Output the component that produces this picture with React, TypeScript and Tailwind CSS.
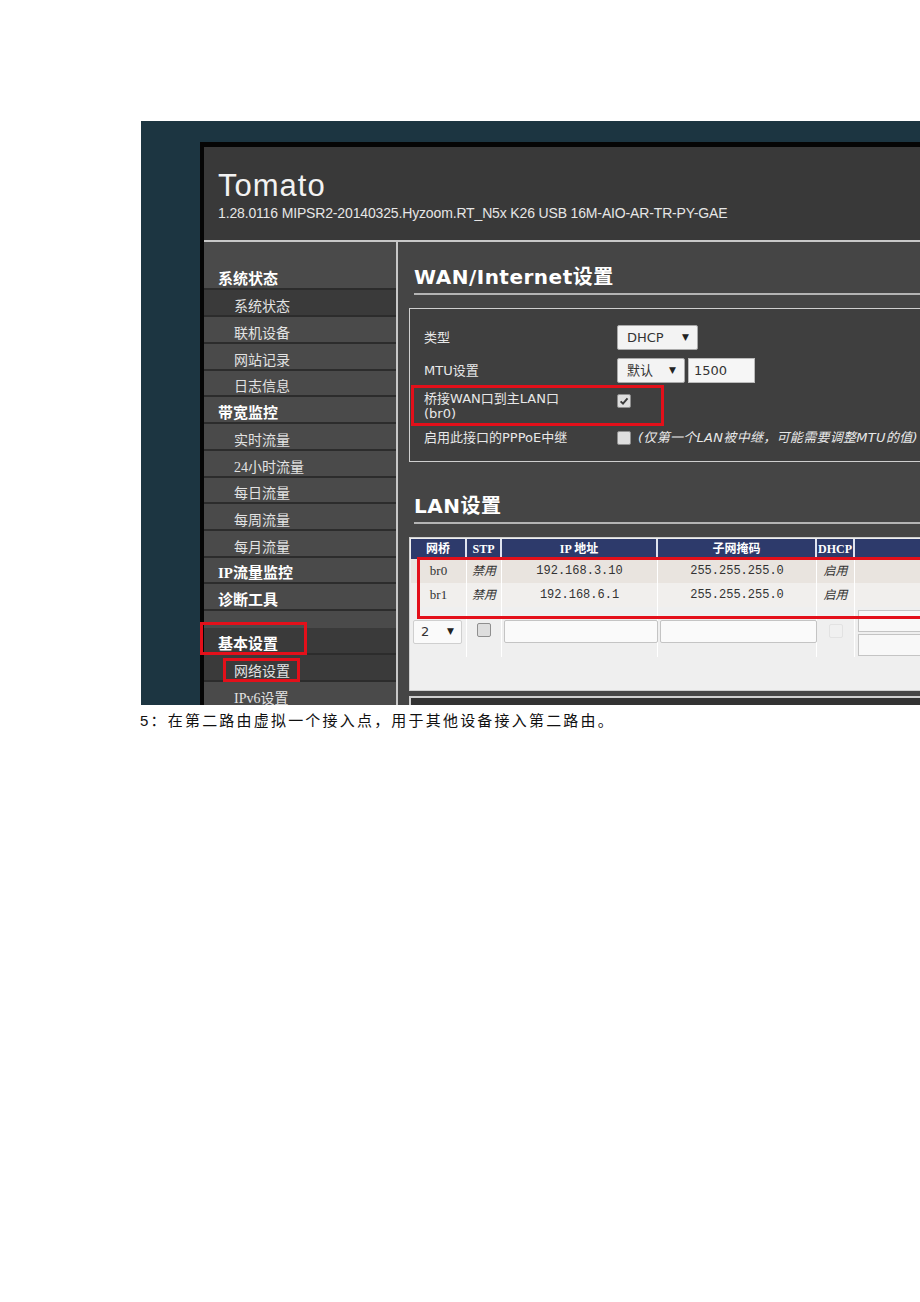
import React from "react"

const ui = "font-['DejaVu_Sans','Noto_Sans_CJK_SC',sans-serif]"
const side = "font-['Liberation_Serif','Noto_Sans_CJK_SC',serif]"
const serif = "font-['Liberation_Serif','Noto_Sans_CJK_SC',serif]"
const mono = "font-['Liberation_Mono','Noto_Sans_CJK_SC',monospace]"

type Item = { label: string; head?: boolean; active?: boolean; h: string }

const menu: Item[] = [
  { label: "系统状态", head: true, h: "h-[27px]" },
  { label: "系统状态", active: true, h: "h-[27px]" },
  { label: "联机设备", h: "h-[27px]" },
  { label: "网站记录", h: "h-[27px]" },
  { label: "日志信息", h: "h-[26px]" },
  { label: "带宽监控", head: true, h: "h-[27px]" },
  { label: "实时流量", h: "h-[27px]" },
  { label: "24小时流量", h: "h-[27px]" },
  { label: "每日流量", h: "h-[26px]" },
  { label: "每周流量", h: "h-[27px]" },
  { label: "每月流量", h: "h-[27px]" },
  { label: "IP流量监控", head: true, h: "h-[26px]" },
  { label: "诊断工具", head: true, h: "h-[27px]" },
]

function MenuRow({ item, children }: { item: Item; children?: React.ReactNode }) {
  return (
    <div
      className={`relative flex items-center border-b-2 border-[#2c2c2c] pt-[7px] ${item.h} ${
        item.active ? "bg-[#3a3a3a]" : ""
      } ${item.head ? "pl-[14px] text-[15px] font-bold text-white" : "pl-[30px] text-[14px] text-[#e2e2e2]"}`}
    >
      {item.label}
      {children}
    </div>
  )
}

function Select({ value, w }: { value: string; w: string }) {
  return (
    <div
      className={`flex h-[25px] ${w} items-center justify-between rounded-[2px] border border-[#a9a9a9] bg-[#f3f3f3] pl-[9px] pr-[8px] text-[13px] text-[#333]`}
    >
      <span>{value}</span>
      <span className="text-[9px] text-[#222]">▼</span>
    </div>
  )
}

function Check({ checked, faded }: { checked?: boolean; faded?: boolean }) {
  return (
    <span
      className={`inline-flex h-[14px] w-[14px] items-center justify-center rounded-[2px] border ${
        faded ? "border-[#e2e2e2] bg-[#f0f0f0]" : "border-[#8f8f8f] bg-[#dedede]"
      }`}
    >
      {checked && (
        <svg viewBox="0 0 10 10" className="h-[10px] w-[10px]">
          <path d="M1.6 5.3 L4 7.7 L8.5 2.3" fill="none" stroke="#3a3a3a" strokeWidth="1.9" />
        </svg>
      )}
    </span>
  )
}

const cols = "grid grid-cols-[56px_35px_156px_159px_38px_1fr]"

const lanRows = [
  { name: "br0", ip: "192.168.3.10", bg: "bg-[#e9e4df]" },
  { name: "br1", ip: "192.168.6.1", bg: "bg-[#f1efed]" },
]

export default function App() {
  return (
    <div className="min-h-[1302px] w-[920px] bg-white">
      <div className="pl-[141px] pt-[121px]">
        <div className="h-[584px] w-[779px] overflow-hidden bg-[#1c3541] pl-[59px] pt-[21px]">
          <div className={`w-[830px] border-l-4 border-t-[5px] border-[#050505] ${ui}`}>
            {/* header */}
            <div className="h-[95px] border-b-2 border-[#c8c8c8] bg-[#393939] pl-[14px] pt-[23px]">
              <div className="font-['Liberation_Sans',sans-serif] text-[31px] leading-[31px] tracking-[1px] text-[#f2f2f2]">
                Tomato
              </div>
              <div className="mt-[5px] font-['Liberation_Sans',sans-serif] text-[14px] leading-[14px] tracking-[-0.15px] text-[#e6e6e6]">
                1.28.0116 MIPSR2-20140325.Hyzoom.RT_N5x K26 USB 16M-AIO-AR-TR-PY-GAE
              </div>
            </div>

            <div className="flex h-[480px]">
              {/* sidebar */}
              <div className={`w-[194px] shrink-0 border-r-2 border-[#c8c8c8] bg-[#4a4a4a] pt-[21px] ${side}`}>
                {menu.map((m, i) => (
                  <MenuRow key={i} item={m} />
                ))}
                <div className="h-[17px]" />
                <MenuRow item={{ label: "基本设置", head: true, active: true, h: "h-[27px]" }}>
                  <div className="absolute left-[-4px] top-[-6px] h-[33px] w-[107px] border-[3px] border-[#e3101a]" />
                </MenuRow>
                <MenuRow item={{ label: "网络设置", active: true, h: "h-[27px]" }}>
                  <div className="absolute left-[19px] top-[3px] h-[24px] w-[77px] border-[3px] border-[#e3101a]" />
                </MenuRow>
                <MenuRow item={{ label: "IPv6设置", h: "h-[27px]" }} />
              </div>

              {/* main */}
              <div className="flex-1 bg-[#454545] pt-[23px]">
                <div className="ml-[16px] border-b-2 border-[#b4b4b4] pb-[4px] text-[20px] font-bold leading-[24px] tracking-[0.5px] text-white">
                  WAN/Internet设置
                </div>

                <div className="ml-[11px] mt-[13px] border border-[#cfcfcf] bg-[#3f3f3f] pb-[12px] pl-[14px] pt-[16px] text-[13px] text-[#e8e8e8]">
                  <div className="flex h-[25px] items-center">
                    <div className="w-[193px]">类型</div>
                    <Select value="DHCP" w="w-[81px]" />
                  </div>
                  <div className="mt-[8px] flex h-[25px] items-center">
                    <div className="w-[193px]">MTU设置</div>
                    <Select value="默认" w="w-[68px]" />
                    <div className="ml-[3px] flex h-[25px] w-[67px] items-center border border-[#bbb] bg-[#f6f6f6] pl-[5px] text-[#333]">
                      1500
                    </div>
                  </div>
                  <div className="relative mt-[2px] flex h-[41px] items-start pt-[6px]">
                    <div className="w-[193px] leading-[15px]">
                      桥接WAN口到主LAN口
                      <br />
                      (br0)
                    </div>
                    <div className="pt-[1px]">
                      <Check checked />
                    </div>
                    <div className="absolute left-[-13px] top-0 h-[41px] w-[253px] border-[3px] border-[#e3101a]" />
                  </div>
                  <div className="flex h-[23px] items-center">
                    <div className="w-[193px]">启用此接口的PPPoE中继</div>
                    <Check />
                    <span className="ml-[7px] whitespace-nowrap text-[13px] italic tracking-[0.3px] text-[#e8e8e8]">
                      (仅第一个LAN被中继，可能需要调整MTU的值)
                    </span>
                  </div>
                </div>

                <div className="ml-[16px] mt-[32px] border-b-2 border-[#b4b4b4] pb-[4px] text-[20px] font-bold leading-[24px] tracking-[0.5px] text-white">
                  LAN设置
                </div>

                <div className="relative ml-[11px] mt-[13px] border border-[#cfcfcf] bg-[#efefef] p-[1px]">
                  <div className={`${cols} h-[20px] bg-[#2d3a6b] text-[12px] font-bold text-white ${serif}`}>
                    {["网桥", "STP", "IP 地址", "子网掩码", "DHCP", ""].map((t, i) => (
                      <div key={i} className={`flex items-center justify-center ${i < 5 ? "border-r-2 border-[#dfe3ee]" : ""}`}>
                        {t}
                      </div>
                    ))}
                  </div>
                  {lanRows.map((r) => (
                    <div key={r.name} className={`${cols} h-[24px] ${r.bg} text-[#333]`}>
                      <div className={`flex items-center justify-center border-r border-white text-[13px] ${serif}`}>{r.name}</div>
                      <div className="flex items-center justify-center border-r border-white text-[12px] italic">禁用</div>
                      <div className={`flex items-center justify-center border-r border-white text-[12px] ${mono}`}>{r.ip}</div>
                      <div className={`flex items-center justify-center border-r border-white text-[12px] ${mono}`}>255.255.255.0</div>
                      <div className="flex items-center justify-center border-r border-white text-[12px] italic">启用</div>
                      <div />
                    </div>
                  ))}
                  <div className={`${cols} h-[50px] text-[13px] text-[#333]`}>
                    <div className="border-r border-white pl-[2px] pt-[13px]">
                      <div className="flex h-[24px] w-[49px] items-center justify-between rounded-[2px] border border-[#cfcfcf] bg-[#fafafa] pl-[7px] pr-[7px]">
                        <span>2</span>
                        <span className="text-[9px] text-[#222]">▼</span>
                      </div>
                    </div>
                    <div className="flex justify-center border-r border-white pt-[16px]">
                      <Check />
                    </div>
                    <div className="border-r border-white pl-[2px] pt-[13px]">
                      <div className="h-[23px] w-[154px] rounded-[2px] border border-[#c4c4c4] bg-[#fafafa]" />
                    </div>
                    <div className="border-r border-white pl-[2px] pt-[13px]">
                      <div className="h-[23px] w-[157px] rounded-[2px] border border-[#c4c4c4] bg-[#fafafa]" />
                    </div>
                    <div className="flex justify-center border-r border-white pt-[17px]">
                      <Check faded />
                    </div>
                    <div className="pl-[3px] pt-[3px]">
                      <div className="h-[22px] w-[200px] border border-[#c4c4c4] bg-[#f8f8f8]" />
                      <div className="mt-[2px] h-[22px] w-[200px] border border-[#c4c4c4] bg-[#f8f8f8]" />
                    </div>
                  </div>
                  <div className="h-[32px]" />
                  <div className="absolute left-[7px] top-[19px] h-[62px] w-[600px] border-[3px] border-[#e3101a]" />
                </div>

                <div className="ml-[11px] mt-[5px] h-[30px] border-l-2 border-t-2 border-[#cfcfcf] bg-[#323232]" />
              </div>
            </div>
          </div>
        </div>
      </div>

      <div className="mt-[6px] pl-[140px] font-['Liberation_Sans','Noto_Sans_CJK_SC',sans-serif] text-[15px] leading-[20px] tracking-[2.2px] text-[#111]">
        5：在第二路由虚拟一个接入点，用于其他设备接入第二路由。
      </div>
    </div>
  )
}
